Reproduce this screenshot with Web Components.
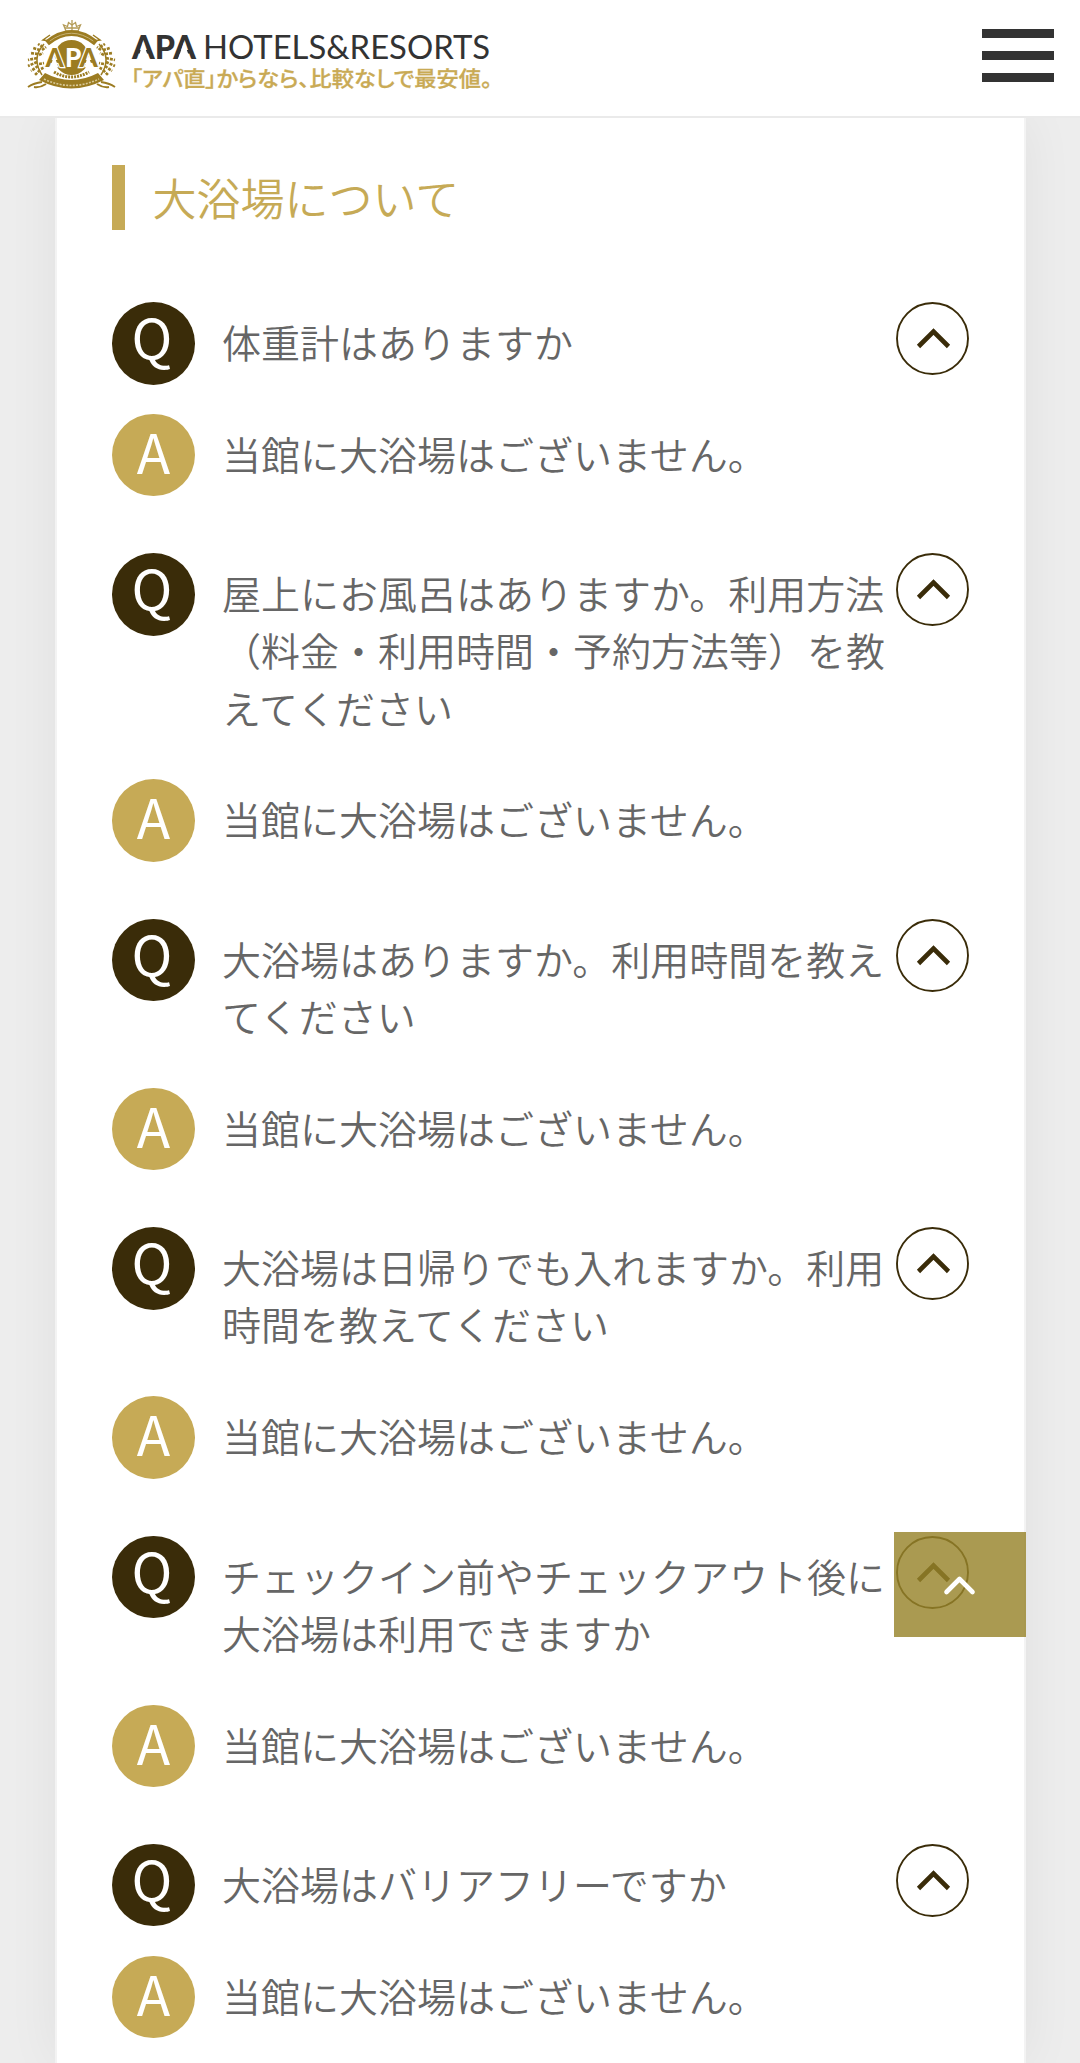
<!DOCTYPE html>
<html lang="ja">
<head>
<meta charset="utf-8">
<title>大浴場について</title>
<style>
  html, body { margin: 0; }
  body {
    height: 2063px;
    overflow: hidden;
    background: #ededed;
    color: #666;
    font-family: "Noto Sans CJK JP", sans-serif;
  }
</style>
</head>
<body>
<apa-header></apa-header>
<faq-card>
  <faq-heading>大浴場について</faq-heading>
  <faq-item><span slot="question">体重計はありますか</span><span slot="answer">当館に大浴場はございません。</span></faq-item>
  <faq-item><span slot="question">屋上にお風呂はありますか。利用方法（料金・利用時間・予約方法等）を教えてください</span><span slot="answer">当館に大浴場はございません。</span></faq-item>
  <faq-item><span slot="question">大浴場はありますか。利用時間を教えてください</span><span slot="answer">当館に大浴場はございません。</span></faq-item>
  <faq-item><span slot="question">大浴場は日帰りでも入れますか。利用時間を教えてください</span><span slot="answer">当館に大浴場はございません。</span></faq-item>
  <faq-item><span slot="question">チェックイン前やチェックアウト後に大浴場は利用できますか</span><span slot="answer">当館に大浴場はございません。</span></faq-item>
  <faq-item><span slot="question">大浴場はバリアフリーですか</span><span slot="answer">当館に大浴場はございません。</span></faq-item>
</faq-card>
<page-top></page-top>

<script>
window.customElements.define('apa-emblem', class ApaEmblem extends HTMLElement {
  constructor() {
    super()
    this.attachShadow({ mode: 'open' })
  }

  connectedCallback() {
    const laurel = `
      <path d="M44 44Q31 58 42 75" stroke-width="1.500"/>
      <path d="M43 47l-5-3M40 50l-7-2M38 54l-8-1M37 58l-9 2M37 62l-9 4M38 66l-7 5M40 70l-5 5M42 50l4-3M39 55l4-2M39 64l5-1M41 69l4-2" stroke-width="2.600" stroke-dasharray="3 1"/>`

    this.shadowRoot.innerHTML = `
      <style>
        :host { display: block; width: 88px; height: 72px; }
        svg { display: block; overflow: visible; }
        text { font-family: Lato, sans-serif; font-weight: 900; font-size: 26px; }
      </style>
      <svg width="88" height="72" viewBox="28 19 88 72" fill="none" stroke="#9c7c22">
        <!-- crown -->
        <path d="M66 31L63.500 25L67.500 26.500L68.500 22.500L72 25L75.500 22.500L76.500 26.500L80.500 25L78 31Z" stroke-width="1.300" stroke="#b39a55"/>
        <path d="M72 20V30M65 28H79" stroke-width="1.300" stroke="#b39a55"/>
        <!-- upper banner -->
        <path d="M47 43Q71.500 23 96 43" stroke-width="6"/>
        <path d="M49 41.500Q71.500 25 94 41.500" stroke="#c5b174" stroke-width="1"/>
        <path d="M50 35L43 40L50 41M93 35L100 40L93 41" stroke-width="1.500"/>
        <!-- laurels -->
        <g>${laurel}</g>
        <g transform="translate(143 0) scale(-1 1)">${laurel}</g>
        <circle cx="71.500" cy="57.500" r="17.500" fill="#9c7c22" stroke="none"/>
        <path d="M54 72Q71 82 89 72" stroke-width="3" stroke-dasharray="2 1"/>
        <!-- lower ribbon -->
        <path d="M45 73Q71 87 98 73L104 80Q71 97 39 80Z" fill="#9c7c22" stroke="none"/>
        <path d="M44 79Q71 92 99 79" stroke="#d8c998" stroke-width="1.600" stroke-dasharray="2 1.300"/>
        <path d="M42 82Q34 83 28 87M46 84Q40 88 34 87M101 82Q109 83 115 87M97 84Q103 88 109 87" stroke-width="2"/>
        <text y="67" fill="#9c7c22" stroke="#fff" stroke-width="2.400" paint-order="stroke"><tspan x="45.500">A</tspan><tspan x="65" fill="#fff" stroke="none">P</tspan><tspan x="79.500">A</tspan></text>
        <path d="M54 55L58.500 67.500H50.500ZM88 55L92.500 67.500H84.500Z" fill="#fff" stroke="none"/>
      </svg>`
  }
})

window.customElements.define('apa-header', class ApaHeader extends HTMLElement {
  constructor() {
    super()
    this.attachShadow({ mode: 'open' })
  }

  connectedCallback() {
    this.shadowRoot.innerHTML = `
      <style>
        :host {
          box-sizing: border-box;
          display: flex;
          justify-content: space-between;
          align-items: flex-start;
          height: 118px;
          padding: 19px 26px 0 28px;
          background: #fff;
          border-bottom: 2px solid #eaeaea;
        }
        .logo { display: flex; gap: 14px; }
        .words { display: block; overflow: visible; }
        .name { font-family: Lato, sans-serif; fill: #333; }
        .tagline {
          font-family: "Noto Sans CJK JP", sans-serif;
          font-feature-settings: "palt";
          font-weight: 500;
          fill: #c9aa55;
          stroke: #c9aa55;
          stroke-width: .3px;
        }
        .menu {
          display: flex;
          flex-direction: column;
          gap: 13px;
          margin-top: 10px;
          padding: 0;
          border: 0;
          background: none;
        }
        .menu i { width: 72px; height: 9px; background: #333; }
      </style>
      <div class="logo">
        <apa-emblem></apa-emblem>
        <svg class="words" width="370" height="76" viewBox="130 19 370 76">
          <g class="name">
            <text x="132" y="58.500" font-size="33" font-weight="900" textLength="64" lengthAdjust="spacingAndGlyphs">APA</text>
            <path d="M143 42L149 59H138ZM184 42L190 59H178Z" fill="#fff"/>
            <text x="203" y="58.500" font-size="33" textLength="287" lengthAdjust="spacingAndGlyphs">HOTELS&amp;RESORTS</text>
          </g>
          <text class="tagline" x="131" y="86" font-size="21" textLength="361" lengthAdjust="spacingAndGlyphs">「アパ直」からなら、比較なしで最安値。</text>
        </svg>
      </div>
      <button class="menu" aria-label="menu"><i></i><i></i><i></i></button>`
  }
})

window.customElements.define('faq-card', class FaqCard extends HTMLElement {
  constructor() {
    super()
    this.attachShadow({ mode: 'open' })
  }

  connectedCallback() {
    this.shadowRoot.innerHTML = `
      <style>
        :host {
          box-sizing: border-box;
          display: block;
          height: 1945px;
          margin: 0 54px 0 55px;
          padding: 47px 55px 0;
          background: #fff;
          border: solid #f3f3f3;
          border-width: 0 2px;
          box-shadow: 0 0 50px rgba(0, 0, 0, .06);
          clip-path: inset(0 -60px);
        }
      </style>
      <slot></slot>`
  }
})

window.customElements.define('faq-heading', class FaqHeading extends HTMLElement {
  constructor() {
    super()
    this.attachShadow({ mode: 'open' })
  }

  connectedCallback() {
    this.shadowRoot.innerHTML = `
      <style>
        :host {
          display: block;
          margin-bottom: 72px;
        }
        h2 {
          margin: 0;
          height: 65px;
          padding-left: 27.500px;
          border-left: 13px solid #c6aa56;
          color: #c6aa56;
          font-size: 44px;
          font-weight: 350;
          line-height: 65px;
        }
      </style>
      <h2><slot></slot></h2>`
  }
})

window.customElements.define('faq-item', class FaqItem extends HTMLElement {
  constructor() {
    super()
    this.attachShadow({ mode: 'open' })
  }

  connectedCallback() {
    this.shadowRoot.innerHTML = `
      <style>
        :host { display: block; }
        .row {
          display: grid;
          grid-template-columns: 110px 674px 73px;
          align-items: start;
        }
        .question { margin-bottom: 43.700px; }
        .answer { margin-bottom: 71.100px; }
        .badge {
          width: 83px;
          height: 82.500px;
          margin-bottom: -20px;
          border-radius: 50%;
          background: #c6aa56;
          color: #fff;
          font-size: 55px;
          line-height: 73px;
          text-align: center;
        }
        .question .badge {
          background: #3a2c09;
          line-height: 67px;
          text-indent: -3px;
        }
        .text {
          width: 666px;
          padding-top: 11px;
          font-size: 39px;
          font-weight: 350;
          line-height: 57.200px;
        }
        .toggle {
          display: block;
          width: 73px;
          height: 73px;
          margin-bottom: -10px;
          padding: 0;
          border: 0;
          background: none;
        }
        .toggle svg { display: block; }
      </style>
      <div class="row question">
        <div class="badge">Q</div>
        <div class="text"><slot name="question"></slot></div>
        <button class="toggle" aria-label="close">
          <svg width="73" height="73" viewBox="0 0 73 73" fill="none" stroke="#3a2c09">
            <circle cx="36.500" cy="36.500" r="35.500" stroke-width="1.900"/>
            <path d="M22.500 44.500L37.500 29.500L52.500 44.500" stroke-width="4.600"/>
          </svg>
        </button>
      </div>
      <div class="row answer">
        <div class="badge">A</div>
        <div class="text"><slot name="answer"></slot></div>
      </div>`
  }
})

window.customElements.define('page-top', class PageTop extends HTMLElement {
  constructor() {
    super()
    this.attachShadow({ mode: 'open' })
  }

  connectedCallback() {
    this.shadowRoot.innerHTML = `
      <style>
        :host {
          position: absolute;
          top: 1532px;
          left: 894px;
          width: 132px;
          height: 105px;
          background: rgba(151, 132, 43, .82);
        }
        svg { display: block; }
      </style>
      <svg width="132" height="105" viewBox="0 0 132 105" fill="none" stroke="#fff">
        <path d="M52.500 60L65.500 47L78.500 60" stroke-width="4.600" stroke-linecap="round" stroke-linejoin="round"/>
      </svg>`
  }
})
</script>
</body>
</html>
